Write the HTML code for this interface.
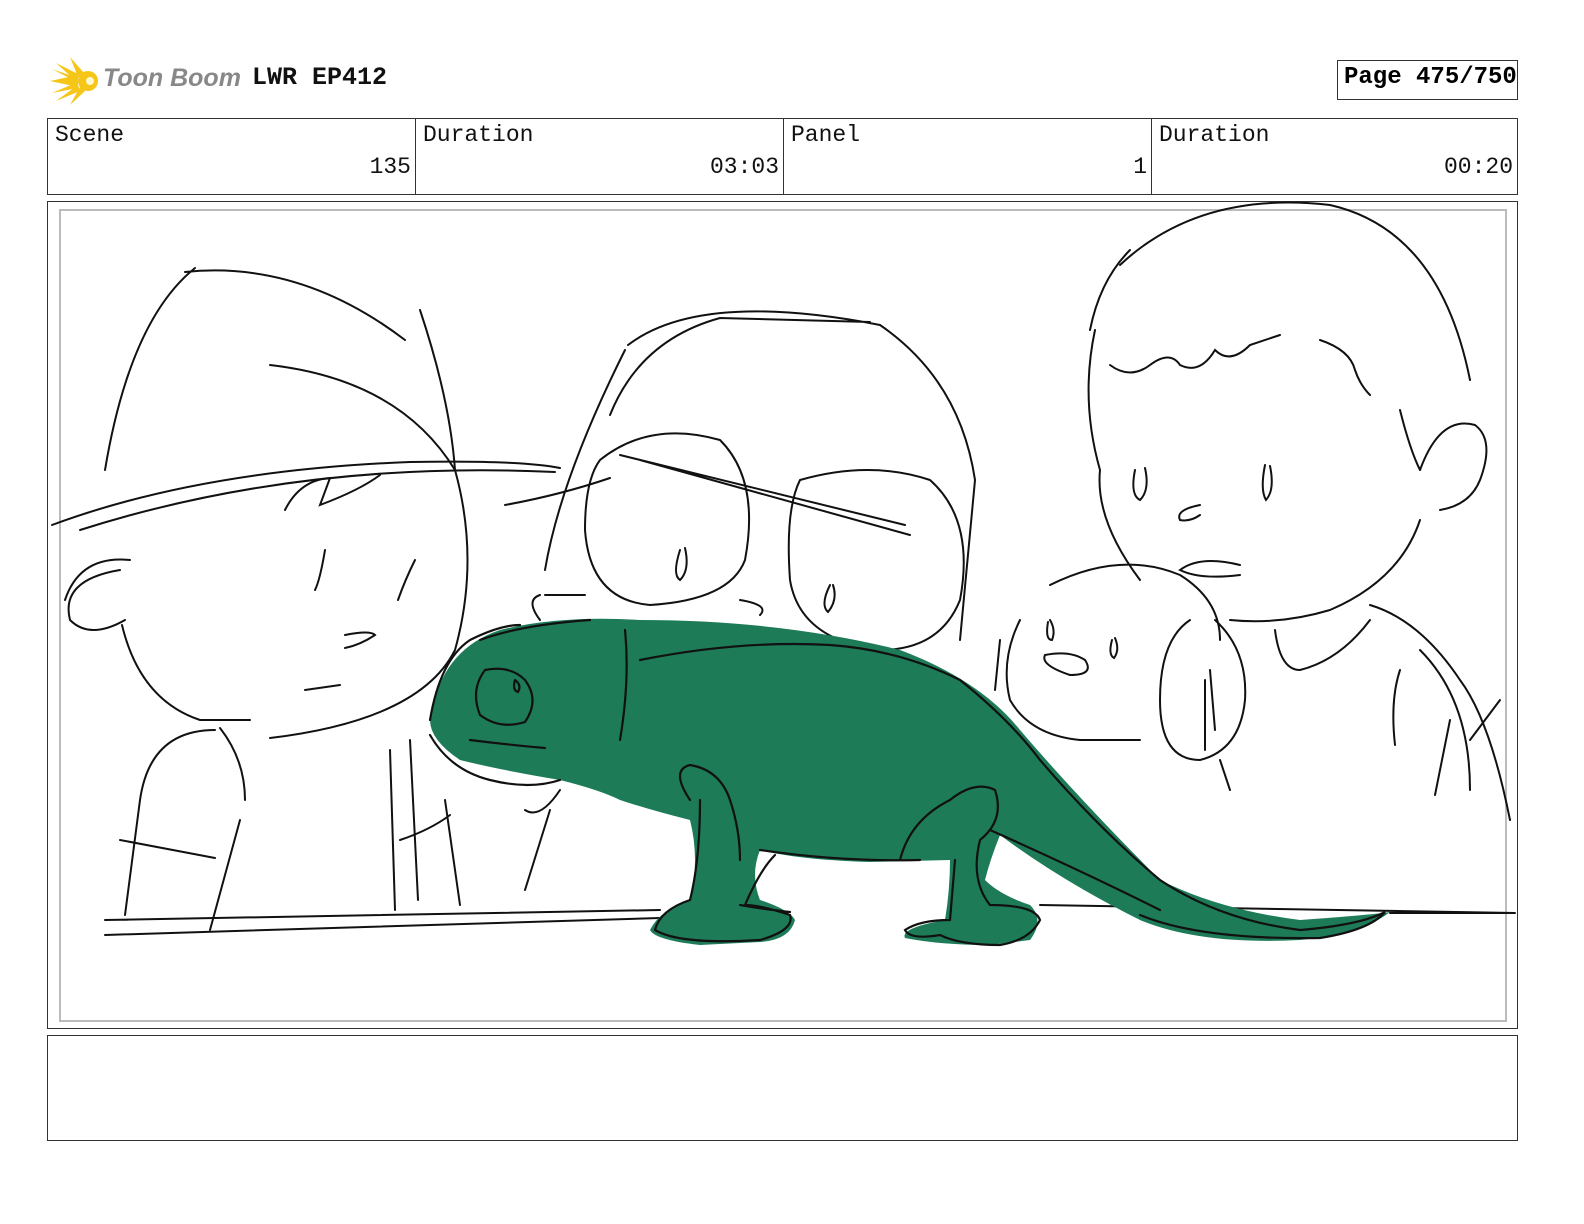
<!DOCTYPE html>
<html><head><meta charset="utf-8"><style>
body{margin:0;background:#fff;width:1584px;height:1224px;position:relative;overflow:hidden;font-family:"Liberation Mono",monospace}
.abs{position:absolute}
.cell{position:absolute;top:118px;height:77px;border:1px solid #333;box-sizing:border-box}
.lab{position:absolute;left:7px;top:3px;font-size:23px;color:#111}
.val{position:absolute;right:4px;top:35px;font-size:23px;color:#111}
</style></head><body>
<svg class="abs" style="left:48px;top:55px" width="60" height="52" viewBox="0 0 60 52">
<g fill="#f5c518">
<path d="M2 26 L30 20 L30 32Z"/><path d="M8 8 L32 20 L28 26Z"/><path d="M22 2 L36 18 L30 22Z"/><path d="M8 46 L30 30 L32 36Z"/><path d="M22 50 L32 32 L37 36Z"/><path d="M4 38 L30 27 L30 33Z"/><path d="M4 14 L30 23 L29 27Z"/>
<circle cx="40" cy="26" r="10"/></g><circle cx="42" cy="26" r="4" fill="#fff8d0"/></svg>
<div class="abs" style="left:103px;top:64px;font-family:'Liberation Sans',sans-serif;font-style:italic;font-weight:bold;font-size:25px;color:#888">Toon Boom</div>
<div class="abs" style="left:252px;top:63px;font-weight:bold;font-size:25px;color:#111">LWR EP412</div>
<div class="abs" style="left:1337px;top:60px;width:181px;height:40px;border:1px solid #333;box-sizing:border-box;font-weight:bold;font-size:24px;padding:3px 0 0 6px">Page 475/750</div>
<div class="cell" style="left:47px;width:369px"><span class="lab">Scene</span><span class="val">135</span></div>
<div class="cell" style="left:415px;width:369px"><span class="lab">Duration</span><span class="val">03:03</span></div>
<div class="cell" style="left:783px;width:369px"><span class="lab">Panel</span><span class="val">1</span></div>
<div class="cell" style="left:1151px;width:367px"><span class="lab">Duration</span><span class="val">00:20</span></div>
<div class="abs" style="left:47px;top:201px;width:1471px;height:828px;border:1px solid #333;box-sizing:border-box"></div>
<div class="abs" style="left:59px;top:209px;width:1448px;height:813px;border:2px solid #bbb;box-sizing:border-box"></div>
<div class="abs" style="left:47px;top:1035px;width:1471px;height:106px;border:1px solid #333;box-sizing:border-box"></div>
<svg class="abs" style="left:0;top:0" width="1584" height="1224" fill="none" stroke="#111" stroke-width="2" stroke-linecap="round">
<!-- left kid -->
<path d="M185 272 Q300 260 405 340 M195 268 Q130 320 105 470 M420 310 Q450 400 455 470"/>
<path d="M270 365 Q400 380 455 470 Q480 560 455 650 Q420 720 270 738"/>
<path d="M52 525 Q200 470 410 462 Q520 460 560 468 M80 530 Q300 460 555 472"/>
<path d="M285 510 Q300 480 330 478 L320 505 Q360 490 380 475"/>
<path d="M120 570 Q60 580 70 620 Q90 640 125 620 M130 560 Q80 555 65 600"/>
<path d="M122 625 Q140 700 200 720 L250 720 M325 550 Q320 580 315 590 M415 560 Q405 580 398 600 M345 635 Q370 630 375 635 Q360 645 345 648 M305 690 L340 685"/>
<path d="M215 730 Q150 730 140 800 L125 915 M220 728 Q245 760 245 800 M120 840 L215 858 M240 820 L210 930 M390 750 L395 910 M410 740 L418 900 M445 800 L460 905 M400 840 Q430 830 450 815"/>
<!-- middle kid -->
<path d="M628 345 Q700 290 880 325 Q960 380 975 480 L960 640 M610 415 Q640 340 720 318 L870 322"/>
<path d="M505 505 Q560 495 610 478 M545 570 Q560 480 625 350"/>
<path d="M600 460 Q650 420 720 440 Q760 480 745 560 Q730 600 650 605 Q590 600 585 530 Q585 480 600 460"/>
<path d="M800 480 Q870 460 930 480 Q975 520 960 600 Q940 650 880 650 Q800 640 790 580 Q785 510 800 480"/>
<path d="M640 460 L910 535 M620 455 L905 525"/>
<path d="M680 550 Q672 575 680 580 Q690 570 685 548 M830 585 Q820 605 828 612 Q838 600 833 585"/>
<path d="M540 595 Q525 600 540 620 M545 595 L585 595 M740 600 Q770 605 760 615"/>
<path d="M525 810 Q540 820 560 790 M525 890 L550 810"/>
<!-- right kid -->
<path d="M1120 265 Q1200 190 1330 205 Q1440 230 1470 380 M1095 330 Q1080 400 1100 470 Q1095 520 1140 580 M1130 250 Q1100 280 1090 330"/>
<path d="M1110 365 Q1130 380 1150 365 Q1170 350 1180 365 Q1200 375 1215 350 Q1230 365 1250 345 Q1265 340 1280 335 M1320 340 Q1350 350 1355 370 Q1360 385 1370 395"/>
<path d="M1420 470 Q1440 415 1475 425 Q1495 440 1480 480 Q1470 505 1440 510 M1400 410 Q1410 450 1420 470"/>
<path d="M1420 520 Q1400 580 1330 610 Q1280 625 1230 620 M1240 565 Q1200 555 1180 570 Q1200 580 1240 575"/>
<path d="M1135 470 Q1130 495 1140 500 Q1150 490 1145 468 M1265 465 Q1260 490 1266 500 Q1275 490 1270 466 M1200 505 Q1175 510 1180 520 Q1190 522 1200 515"/>
<path d="M1275 630 Q1280 670 1300 670 Q1340 660 1370 620 M1370 605 Q1420 620 1460 680 Q1490 720 1510 820 M1400 670 Q1390 700 1395 745 M1420 650 Q1470 700 1470 790 M1450 720 L1435 795 M1470 740 L1500 700"/>
<!-- dog -->
<path d="M1050 585 Q1120 550 1180 575 Q1220 600 1220 640 M1020 620 Q1000 660 1010 700 Q1030 735 1080 740 L1140 740 M1000 640 L995 690"/>
<path d="M1190 620 Q1160 640 1160 700 Q1160 760 1200 760 Q1240 750 1245 700 Q1248 650 1215 620 M1220 760 L1230 790"/>
<path d="M1045 655 Q1040 665 1070 675 Q1095 675 1085 660 Q1070 650 1045 655 M1048 622 Q1045 640 1052 640 Q1056 630 1050 620 M1112 640 Q1108 655 1114 658 Q1120 650 1115 638"/>
<path d="M1210 670 L1215 730 M1205 680 L1205 750"/>
<path d="M105 935 L660 918 M105 920 L660 910 M1040 905 L1515 913 M1390 913 L1515 913"/>
</svg>
<svg class="abs" style="left:0;top:0" width="1584" height="1224">
<path fill="#1e7b58" d="M430 720 Q440 650 500 630 Q560 615 640 620 Q780 620 900 650 Q980 680 1020 730 Q1080 800 1160 880 Q1220 910 1300 920 Q1370 915 1390 912 Q1360 935 1300 940 Q1200 945 1140 920 Q1060 880 1000 835 Q990 860 985 880 Q1000 895 1030 905 Q1045 920 1030 940 L990 945 Q940 945 905 938 Q900 928 945 920 Q950 890 950 860 L870 862 Q800 860 760 850 Q750 875 760 900 Q790 910 795 920 Q790 940 760 942 L700 945 Q655 940 650 930 Q660 910 690 900 Q700 860 690 820 Q650 810 620 800 Q600 790 560 780 Q500 770 460 760 Q430 740 430 720Z"/>
<g fill="none" stroke="#111" stroke-width="2.2" stroke-linecap="round">
<path d="M430 720 Q440 660 470 640 Q500 625 520 625 M480 640 Q520 625 590 620 M470 740 Q510 745 545 748 M430 735 Q450 770 490 780 Q530 790 560 780"/>
<path d="M485 670 Q470 690 480 715 Q500 730 525 722 Q540 700 525 680 Q510 665 485 670 M515 680 Q512 690 518 692 Q522 685 515 680"/>
<path d="M625 630 Q630 680 620 740 M640 660 Q740 640 830 645 Q900 650 960 680 Q1010 720 1040 760 Q1100 830 1160 880 Q1220 920 1300 930 Q1360 925 1385 912 Q1370 930 1320 938 Q1200 940 1140 915 M990 830 Q1080 870 1160 910"/>
<path d="M690 800 Q670 770 690 765 Q720 770 730 800 Q740 830 740 860 M700 800 Q700 860 690 900 Q660 910 655 930 Q680 945 760 940 Q795 930 790 915 Q760 905 745 905 Q760 870 775 855 M740 905 Q770 910 790 912"/>
<path d="M760 850 Q840 862 920 860 M950 800 Q975 780 995 790 Q1005 820 980 840 Q970 880 990 905 Q1035 905 1040 920 Q1030 940 1000 945 Q960 945 940 935 Q910 940 905 930 Q920 920 950 920 M955 860 L950 920 M900 860 Q910 820 950 800"/>
</g></svg>
</body></html>
